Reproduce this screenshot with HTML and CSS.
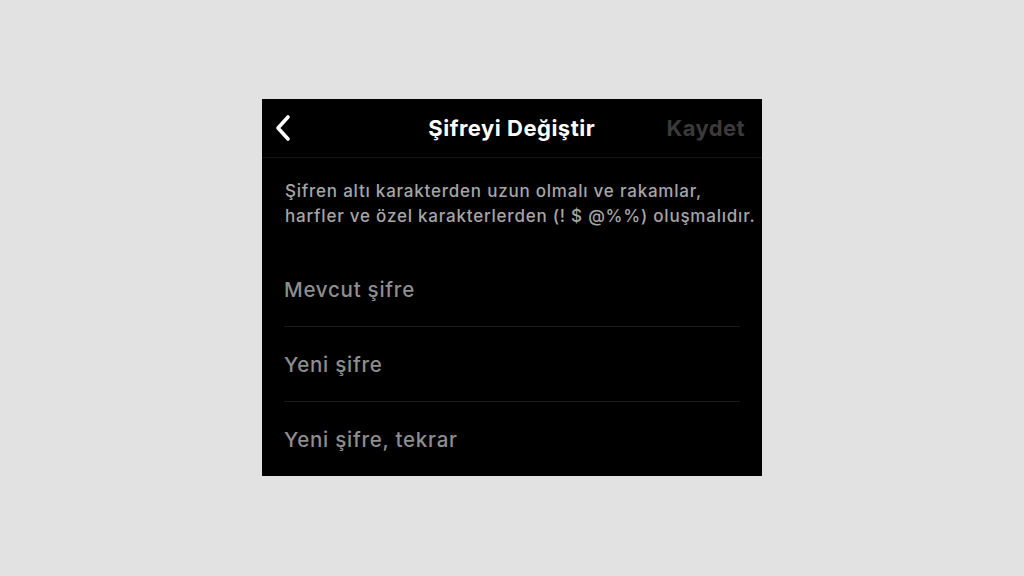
FILE: index.html
```html
<!DOCTYPE html>
<html lang="tr">
<head>
    <meta charset="UTF-8">
    <meta name="viewport" content="width=device-width, initial-scale=1.0">
    <title>Şifreyi Değiştir</title>
    <link rel="stylesheet" href="styles.css">
</head>
<body>

<div class="screen">
    <!-- Header -->
    <div class="header">
        <button class="back" aria-label="Geri">
            <svg width="18" height="28" viewBox="0 0 18 28">
                <path d="M14 3 L4 14 L14 25" fill="none" stroke="#fff" stroke-width="3.6" stroke-linecap="round" stroke-linejoin="round"/>
            </svg>
        </button>
        <h1 class="title">Şifreyi Değiştir</h1>
        <span class="save">Kaydet</span>
    </div>

    <p class="hint">Şifren altı karakterden uzun olmalı ve rakamlar,<br>harfler ve özel karakterlerden (! $ @%%) oluşmalıdır.</p>

    <!-- Fields -->
    <div class="fields">
        <div class="field">Mevcut şifre</div>
        <div class="field">Yeni şifre</div>
        <div class="field">Yeni şifre, tekrar</div>
    </div>
</div>

</body>
</html>
```

FILE: styles.css
```css
body {
    margin: 0;
    padding-top: 99px;
    background-color: #e2e2e2;
    font-family: Inter, "Noto Sans", sans-serif;
    display: flex;
    justify-content: center;
}
.screen {
    width: 500px;
    height: 377px;
    background-color: #000;
    display: flex;
    flex-direction: column;
}
.header {
    height: 58px;
    border-bottom: 1px solid #151515;
    display: flex;
    align-items: center;
    justify-content: space-between;
    padding: 0 17px 0 12px;
}
.back {
    background: none;
    border: none;
    padding: 0;
    width: 20px;
    display: flex;
    cursor: pointer;
}
.title {
    margin: 0 0 0 63px;
    font-size: 22px;
    font-weight: 700;
    letter-spacing: 0.5px;
    color: #fff;
}
.save {
    font-size: 22px;
    font-weight: 700;
    letter-spacing: 0.4px;
    color: #3a3a3a;
}
.hint {
    margin: 21px 0 0;
    padding: 0 0 0 23px;
    font-size: 17px;
    font-weight: 500;
    letter-spacing: 0.78px;
    line-height: 25px;
    white-space: nowrap;
    color: #a6a6a6;
}
.fields {
    margin: 23px 22px 0;
}
.field {
    height: 74px;
    display: flex;
    align-items: center;
    font-size: 20.5px;
    font-weight: 500;
    letter-spacing: 0.75px;
    color: #8e8e8e;
    border-bottom: 1px solid #1a1a1a;
}
.field:last-child {
    border-bottom: none;
}
```
